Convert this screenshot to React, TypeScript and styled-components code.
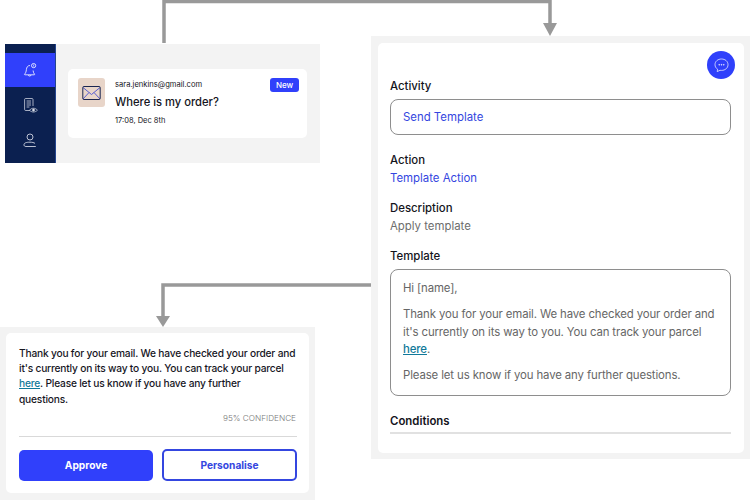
import styled, { createGlobalStyle } from 'styled-components';

const GlobalStyle = createGlobalStyle`
  html, body {
    margin: 0;
    padding: 0;
    background: #fff;
    font-family: "Inter", "Liberation Sans", sans-serif;
  }
`;

const Canvas = styled.div`
  position: relative;
  width: 750px;
  height: 500px;
  overflow: hidden;
`;

const Connectors = styled.svg`
  position: absolute;
  top: 0;
  left: 0;
`;

// Diagram nodes
const Node = styled.div<{ $x: number; $y: number; $w: number; $h: number }>`
  position: absolute;
  left: ${(p) => p.$x}px;
  top: ${(p) => p.$y}px;
  width: ${(p) => p.$w}px;
  height: ${(p) => p.$h}px;
  box-sizing: border-box;
  background: #f3f3f3;
`;

const InboxNode = styled(Node)`
  display: flex;
`;

const Sidebar = styled.div`
  width: 50px;
  padding-top: 9px;
  background: #0b2050;
  display: flex;
  flex-direction: column;
  border-right: 1px solid #24458f;
`;

const NavItem = styled.div<{ $active?: boolean }>`
  height: 34px;
  margin-bottom: 1px;
  display: flex;
  align-items: center;
  justify-content: center;
  background: ${(p) => (p.$active ? '#3040fb' : 'transparent')};
`;

const InboxBody = styled.div`
  flex: 1;
  padding: 25px 13px 25px 12px;
`;

const MailCard = styled.div`
  height: 69px;
  box-sizing: border-box;
  padding: 9px 8px 0 10px;
  background: #fff;
  border-radius: 5px;
  display: flex;
`;

const Thumb = styled.div`
  width: 27px;
  height: 29px;
  border-radius: 3px;
  background: #e8d5c9;
  display: flex;
  align-items: center;
  justify-content: center;
`;

const MailText = styled.div`
  flex: 1;
  margin-left: 10px;
  color: #14141c;
`;

const MailAddress = styled.div`
  font-size: 7.6px;
  line-height: 14px;
`;

const MailTitle = styled.div`
  font-size: 11.2px;
  line-height: 18px;
  margin-top: 1px;
  font-weight: 500;
`;

const MailDate = styled.div`
  font-size: 7.5px;
  line-height: 12px;
  margin-top: 4px;
`;

const Badge = styled.div`
  width: 29px;
  height: 14px;
  border-radius: 3px;
  background: #3040fb;
  color: #fff;
  font-size: 8px;
  font-weight: 500;
  line-height: 14px;
  text-align: center;
`;

const RuleCard = styled.div`
  height: 410px;
  margin: 7px 6px 0 7px;
  padding: 8px 13px 0 12px;
  box-sizing: border-box;
  background: #fff;
  border-radius: 5px;
  position: relative;
`;

const Fab = styled.div`
  position: absolute;
  top: 8px;
  right: 9px;
  width: 28px;
  height: 28px;
  border-radius: 50%;
  background: #2f40fb;
  display: flex;
  align-items: center;
  justify-content: center;
`;

const FieldLabel = styled.div<{ $top: number }>`
  margin-top: ${(p) => p.$top}px;
  font-size: 11.4px;
  line-height: 16px;
  font-weight: 500;
  color: #14141c;
`;

const FieldValue = styled.div<{ $blue?: boolean }>`
  margin-top: 2px;
  font-size: 11.4px;
  line-height: 16px;
  color: ${(p) => (p.$blue ? '#3446e0' : '#6d6d6d')};
`;

const InputBox = styled.div`
  margin-top: 5px;
  height: 36px;
  box-sizing: border-box;
  padding-left: 12px;
  border: 1px solid #8e8e8e;
  border-radius: 8px;
  font-size: 11.4px;
  line-height: 34px;
  color: #3446e0;
`;

const TemplateBox = styled.div`
  margin-top: 5px;
  height: 127px;
  box-sizing: border-box;
  padding: 10px 12px 0;
  border: 1px solid #8e8e8e;
  border-radius: 8px;
  color: #666;
  font-size: 11.4px;
  line-height: 17.3px;
  letter-spacing: -0.12px;
`;

const Para = styled.p<{ $after?: number }>`
  margin: 0 0 ${(p) => p.$after ?? 0}px;
  white-space: nowrap;
`;

const Link = styled.span`
  color: #11799a;
  text-decoration: underline;
  font-weight: 500;
`;

const SectionTitle = styled.div`
  margin-top: 17px;
  padding-bottom: 3px;
  font-size: 11.4px;
  line-height: 16px;
  font-weight: 600;
  color: #14141c;
  border-bottom: 2px solid #e1e1e1;
`;

const SuggestCard = styled.div`
  height: 160px;
  margin: 6px 6px 0;
  padding: 13px 12px 0 13px;
  box-sizing: border-box;
  background: #fff;
  border-radius: 5px;
`;

const SuggestText = styled.div`
  font-size: 10.2px;
  line-height: 15.2px;
  font-weight: 500;
  letter-spacing: -0.19px;
  color: #17171f;
`;

const Confidence = styled.div`
  margin-top: 5px;
  padding: 0 1px 12px 0;
  border-bottom: 1px solid #d9d9d9;
  text-align: right;
  font-size: 8.2px;
  line-height: 12px;
  font-weight: 300;
  color: #7a7a7a;
`;

const Buttons = styled.div`
  margin-top: 12px;
  display: flex;
  gap: 9px;
  align-items: flex-end;
`;

const Button = styled.div<{ $outline?: boolean }>`
  width: ${(p) => (p.$outline ? 135 : 134)}px;
  box-sizing: border-box;
  height: ${(p) => (p.$outline ? 32 : 31)}px;
  border-radius: 5px;
  border: ${(p) => (p.$outline ? '2.5px solid #3446e0' : 'none')};
  background: ${(p) => (p.$outline ? '#fff' : '#3040fb')};
  color: ${(p) => (p.$outline ? '#3446e0' : '#fff')};
  display: flex;
  align-items: center;
  justify-content: center;
  font-size: 10.2px;
  font-weight: 700;
`;

const BellIcon = () => (
  <svg width="16" height="16" viewBox="0 0 16 16" fill="none" stroke="#fff" strokeWidth="0.8">
    <path d="M8 3.5C5.5 3.5 4.6 5.5 4.4 7.5C4.2 9.8 3.6 11 2.6 12.2C2.4 12.5 2.6 12.8 3 12.8H12.2C12.6 12.8 12.8 12.5 12.5 12.2C11.6 11.1 11.2 10 11.1 8.5" />
    <path d="M6.3 13C6.5 14.4 8.8 14.4 9.1 13" />
    <circle cx="11.6" cy="3.6" r="2.1" />
    <path d="M11.6 2.6V3.8M11.6 4.3V4.7" />
  </svg>
);

const ReviewIcon = () => (
  <svg width="17" height="17" viewBox="0 0 17 17" fill="none" stroke="#e6e9f2" strokeWidth="0.7">
    <path d="M8 13.5H3.6C3 13.5 2.6 13.1 2.6 12.5V2.5C2.6 1.9 3 1.5 3.6 1.5H10C10.6 1.5 11 1.9 11 2.5V9" />
    <path d="M4.6 4H9M4.6 6H9M4.6 8H9M4.6 10H7.4" />
    <path d="M7.6 13.2C9.6 10.6 13.2 10.6 15.4 13.2C13.2 15.6 9.6 15.6 7.6 13.2Z" />
    <circle cx="11.5" cy="13.1" r="1" fill="#e6e9f2" />
  </svg>
);

const UserIcon = () => (
  <svg width="16" height="17" viewBox="0 0 16 17" fill="none" stroke="#e6e9f2" strokeWidth="0.8">
    <circle cx="8" cy="5" r="3" />
    <path d="M13.8 14.5H4C2.6 14.5 2 13.8 2 12.8C2 11 4 10.2 8 10.2C10.2 10.2 12 10.6 13 11.4" />
  </svg>
);

const EnvelopeIcon = () => (
  <svg width="19" height="16" viewBox="0 0 19 16" fill="none" strokeWidth="1">
    <path d="M1 2.5L9.5 9.5L18 2.5" stroke="#5a5fd0" />
    <path d="M1 14L7 7.5M18 14L12 7.5" stroke="#5a5fd0" />
    <rect x="0.8" y="1.5" width="17.4" height="13" rx="1" stroke="#1a2550" />
  </svg>
);

const ChatIcon = () => (
  <svg width="15" height="15" viewBox="0 0 15 15" fill="none" stroke="#fff" strokeWidth="0.7">
    <path d="M7.5 1C3.8 1 1 3.4 1 6.7C1 8.6 2 10.2 3.6 11.2L3.2 13.6L6 12.3C6.5 12.4 7 12.4 7.5 12.4C11.2 12.4 14 10 14 6.7C14 3.4 11.2 1 7.5 1Z" />
    <circle cx="5.2" cy="6.8" r="0.4" fill="#fff" />
    <circle cx="7.5" cy="6.8" r="0.4" fill="#fff" />
    <circle cx="9.8" cy="6.8" r="0.4" fill="#fff" />
  </svg>
);

const App = () => {
  return (
    <Canvas>
      <GlobalStyle />
      <InboxNode $x={5} $y={44} $w={315} $h={119}>
        <Sidebar>
          <NavItem $active>
            <BellIcon />
          </NavItem>
          <NavItem>
            <ReviewIcon />
          </NavItem>
          <NavItem>
            <UserIcon />
          </NavItem>
        </Sidebar>
        <InboxBody>
          <MailCard>
            <Thumb>
              <EnvelopeIcon />
            </Thumb>
            <MailText>
              <MailAddress>sara.jenkins@gmail.com</MailAddress>
              <MailTitle>Where is my order?</MailTitle>
              <MailDate>17:08, Dec 8th</MailDate>
            </MailText>
            <Badge>New</Badge>
          </MailCard>
        </InboxBody>
      </InboxNode>

      <Node $x={371} $y={36} $w={379} $h={423}>
        <RuleCard>
          <Fab>
            <ChatIcon />
          </Fab>
          <FieldLabel $top={27}>Activity</FieldLabel>
          <InputBox>Send Template</InputBox>
          <FieldLabel $top={17}>Action</FieldLabel>
          <FieldValue $blue>Template Action</FieldValue>
          <FieldLabel $top={14}>Description</FieldLabel>
          <FieldValue>Apply template</FieldValue>
          <FieldLabel $top={14}>Template</FieldLabel>
          <TemplateBox>
            <Para $after={9}>Hi [name],</Para>
            <Para>Thank you for your email. We have checked your order and</Para>
            <Para>it's currently on its way to you. You can track your parcel</Para>
            <Para $after={9}>
              <Link>here</Link>.
            </Para>
            <Para>Please let us know if you have any further questions.</Para>
          </TemplateBox>
          <SectionTitle>Conditions</SectionTitle>
        </RuleCard>
      </Node>

      <Node $x={0} $y={327} $w={315} $h={173}>
        <SuggestCard>
          <SuggestText>
            <Para>Thank you for your email. We have checked your order and</Para>
            <Para>it's currently on its way to you. You can track your parcel</Para>
            <Para>
              <Link>here</Link>. Please let us know if you have any further
            </Para>
            <Para>questions.</Para>
          </SuggestText>
          <Confidence>95% CONFIDENCE</Confidence>
          <Buttons>
            <Button>Approve</Button>
            <Button $outline>Personalise</Button>
          </Buttons>
        </SuggestCard>
      </Node>

      <Connectors width="750" height="500" fill="none" stroke="#999" strokeWidth="3.5">
        <path d="M164 43V1.5H550V24" />
        <path d="M543 23H557L550 36Z" fill="#999" stroke="none" />
        <path d="M371 285H163V317" />
        <path d="M156 316H170L163 327Z" fill="#999" stroke="none" />
      </Connectors>
    </Canvas>
  );
};

export default App;
